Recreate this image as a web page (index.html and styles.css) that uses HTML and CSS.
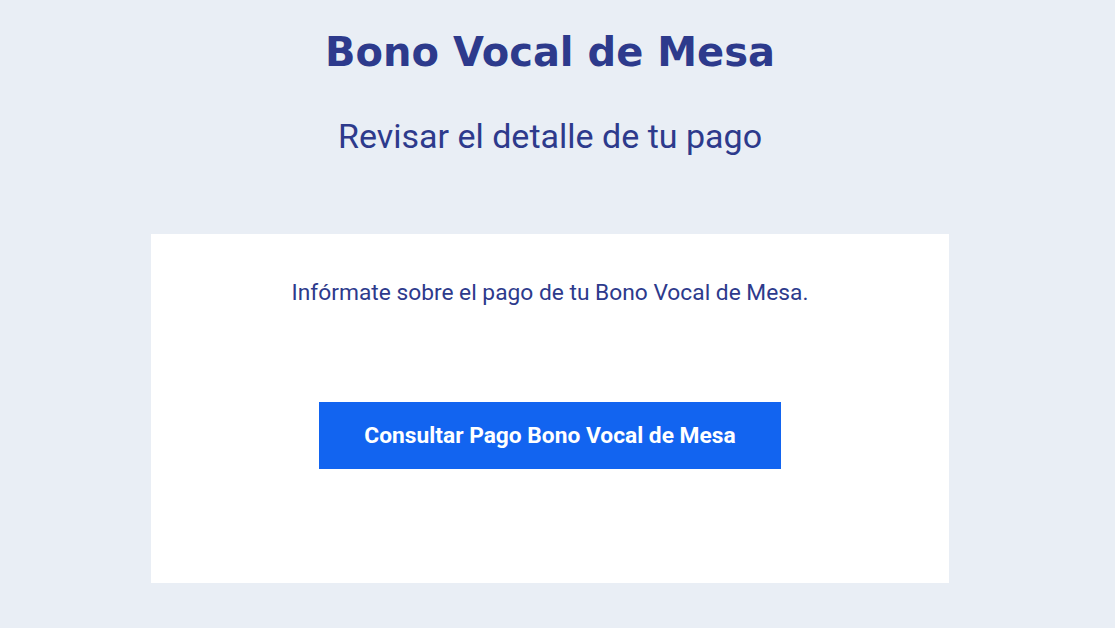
FILE: index.html
```html
<!DOCTYPE html>
<html lang="es">
<head>
<meta charset="utf-8">
<title>Bono Vocal de Mesa</title>
<link rel="stylesheet" href="styles.css">
</head>
<body>
<main class="page">
  <h1 class="title">Bono Vocal de Mesa</h1>
  <h2 class="subtitle">Revisar el detalle de tu pago</h2>
  <section class="card">
    <p class="card-text">Infórmate sobre el pago de tu Bono Vocal de Mesa.</p>
    <a class="btn" href="#">Consultar Pago Bono Vocal de Mesa</a>
  </section>
</main>
</body>
</html>
```
FILE: styles.css
```css
html, body {
  margin: 0;
  padding: 0;
  background: #e9eef5;
}
body {
  font-family: Roboto, "Liberation Sans", sans-serif;
  color: #2d3a8c;
}
.page {
  width: 1100px;
  display: flex;
  flex-direction: column;
  align-items: center;
}
.title {
  margin: 26px 0 0;
  font-family: "DejaVu Sans", sans-serif;
  font-weight: bold;
  font-size: 40px;
  line-height: 52px;
  color: #2d3a8c;
}
.subtitle {
  margin: 38px 0 0;
  font-weight: 400;
  font-size: 34px;
  line-height: 40px;
  color: #2d3a8c;
}
.card {
  margin-top: 78px;
  width: 798px;
  height: 349px;
  box-sizing: border-box;
  background: #fff;
  display: flex;
  flex-direction: column;
  align-items: center;
  padding-top: 45px;
}
.card-text {
  margin: 0;
  font-size: 22.75px;
  line-height: 28px;
  color: #2d3a8c;
}
.btn {
  margin-top: 95px;
  width: 462px;
  height: 67px;
  display: flex;
  align-items: center;
  justify-content: center;
  background: #1264f0;
  color: #fff;
  font-weight: bold;
  font-size: 22.75px;
  text-decoration: none;
}
```
